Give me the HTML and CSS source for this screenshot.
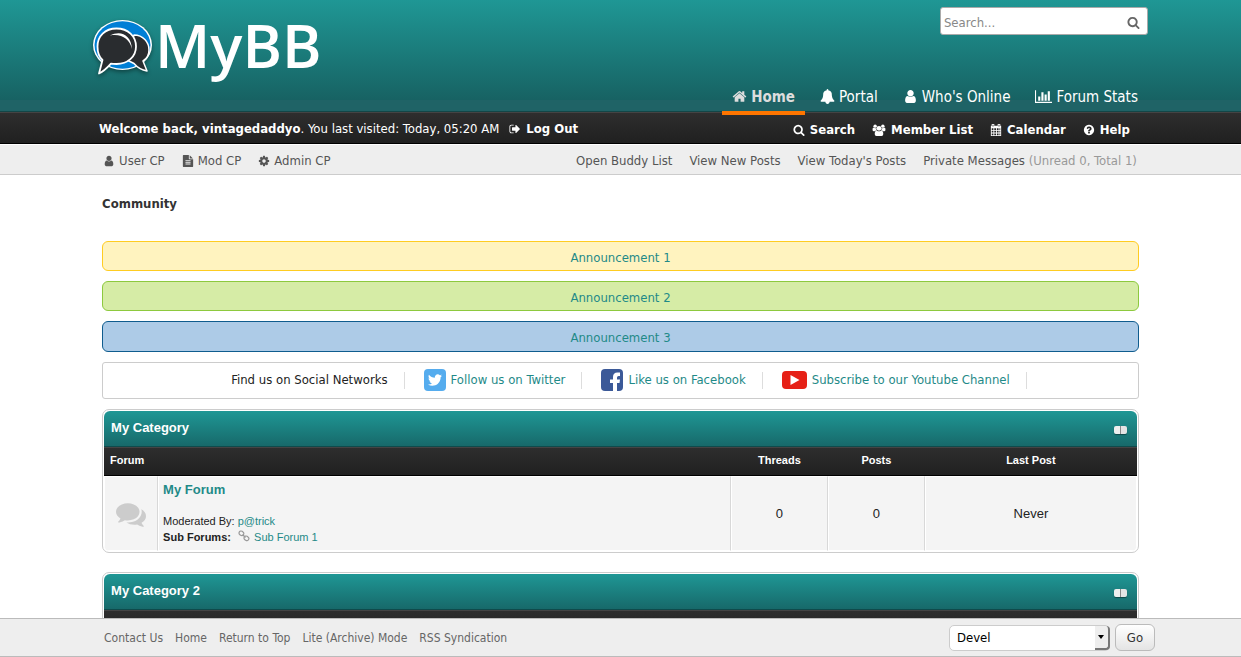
FILE: index.html
```html
<!DOCTYPE html>
<html lang="en">
<head>
<meta charset="utf-8">
<title>Community</title>
<link rel="stylesheet" href="styles.css">
</head>
<body>
<svg class="defs" aria-hidden="true">
  <symbol id="search" viewBox="0 0 1792 1792"><path d="M1216 832q0-185-131.500-316.500t-316.500-131.500-316.500 131.500-131.500 316.500 131.500 316.500 316.500 131.500 316.500-131.500 131.500-316.500zm512 832q0 52-38 90t-90 38q-54 0-90-38l-343-342q-179 124-399 124-143 0-273.500-55.500t-225-150-150-225-55.500-273.500 55.500-273.500 150-225 225-150 273.500-55.500 273.500 55.500 225 150 150 225 55.500 273.500q0 220-124 399l343 343q37 37 37 90z"/></symbol>
  <symbol id="user" viewBox="0 0 1792 1792"><path d="M1536 1399q0 109-62.500 187t-150.500 78h-854q-88 0-150.500-78t-62.500-187q0-85 8.500-160.500t31.500-152 58.500-131 94-89 134.500-34.500q131 128 313 128t313-128q76 0 134.500 34.500t94 89 58.500 131 31.500 152 8.500 160.500zm-256-887q0 159-112.500 271.500t-271.500 112.500-271.500-112.500-112.500-271.500 112.500-271.500 271.500-112.500 271.500 112.500 112.500 271.500z"/></symbol>
</svg>

<header>
  <div class="banner">
    <div class="wrap banner-row">
      <a class="logo" href="#">
        <svg class="logo-mark" viewBox="0 0 60 60" aria-hidden="true">
          <ellipse cx="29.500" cy="26" rx="29.500" ry="25" fill="#fff"/>
          <ellipse cx="29.500" cy="26" rx="28" ry="23.800" fill="#007fd6"/>
          <path d="M41 16C50 16 56 23 56 31c0 5-2 8.500-6 11l4 10c-6-1-10-4-13-7.500l-8-4z" fill="#292c2f" stroke="#fff" stroke-width="1.500" stroke-linejoin="round"/>
          <path d="M23.500 9.500C35 9.500 43 17 43 27.500S34.500 45 23.500 45c-2 0-4 0-5.500-.4-4 4.500-7 7.900-12 9.900l3.500-13.500C5.500 37.500 4.500 33 4.500 27.500 4.500 17 12 9.500 23.500 9.500z" fill="#292c2f" stroke="#fff" stroke-width="1.800" stroke-linejoin="round"/>
          <path d="M17 16.500C27 11 38 15 39 30c-2.500-10-10-15.500-22-13.500z" fill="#fff"/>
        </svg>
        <span>MyBB</span>
      </a>
      <div class="banner-side">
        <form class="search">
          <input type="text" placeholder="Search..." aria-label="Search">
          <button type="button" aria-label="Search"><svg class="icon"><use href="#search"/></svg></button>
        </form>
        <nav class="main-nav">
          <a class="active" href="#"><svg class="icon" viewBox="0 0 1792 1792"><path d="M1472 992v480q0 26-19 45t-45 19h-384v-384h-256v384h-384q-26 0-45-19t-19-45v-480q0-1 .5-3t.5-3l575-474 575 474q1 2 1 6zm223-69l-62 74q-8 9-21 11h-3q-13 0-21-7l-692-577-692 577q-12 8-24 7-13-2-21-11l-62-74q-8-10-7-23.500t11-21.500l719-599q32-26 76-26t76 26l244 204v-195q0-14 9-23t23-9h192q14 0 23 9t9 23v408l219 182q10 8 11 21.500t-7 23.500z"/></svg>Home</a>
          <a href="#"><svg class="icon" viewBox="0 0 1792 1792"><path d="M1728 1408q0 52-38 90t-90 38h-448q0 106-75 181t-181 75-181-75-75-181h-448q-52 0-90-38t-38-90q50-42 91-88t85-119.500 74.500-158.500 50-206 19.500-260q0-152 117-282.500t307-158.500q-8-19-8-39 0-40 28-68t68-28 68 28 28 68q0 20-8 39 190 28 307 158.500t117 282.500q0 139 19.500 260t50 206 74.500 158.500 85 119.500 91 88z"/></svg>Portal</a>
          <a href="#"><svg class="icon"><use href="#user"/></svg>Who's Online</a>
          <a href="#"><svg class="icon wide" viewBox="0 0 2048 1792"><path d="M640 896v512h-256v-512h256zm384-512v1024h-256v-1024h256zm1024 1152v128h-2048v-1536h128v1408h1920zm-640-896v768h-256v-768h256zm384-384v1152h-256v-1152h256z"/></svg>Forum Stats</a>
        </nav>
      </div>
    </div>
  </div>

  <div class="welcome">
    <div class="wrap welcome-row">
      <p class="greeting"><span><b>Welcome back, vintagedaddyo</b>. You last visited: Today, 05:20 AM</span>
        <a href="#"><svg class="icon" viewBox="0 0 1792 1792"><path d="M704 1440q0 4 1 20t.5 26.500-3 23.500-10 19.500-20.500 6.500h-320q-119 0-203.500-84.500t-84.500-203.500v-704q0-119 84.500-203.500t203.500-84.500h320q13 0 22.500 9.500t9.500 22.500q0 4 1 20t.5 26.500-3 23.500-10 19.500-20.500 6.500h-320q-66 0-113 47t-47 113v704q0 66 47 113t113 47h312l11.500 1 11.500 3 8 5.500 7 9 2 13.500zm928-544q0 26-19 45l-544 544q-19 19-45 19t-45-19-19-45v-288h-448q-26 0-45-19t-19-45v-384q0-26 19-45t45-19h448v-288q0-26 19-45t45-19 45 19l544 544q19 19 19 45z"/></svg>Log Out</a>
      </p>
      <nav class="tools">
        <a href="#"><svg class="icon"><use href="#search"/></svg>Search</a>
        <a href="#"><svg class="icon wide" viewBox="0 0 15 14"><circle cx="3" cy="2.500" r="2"/><circle cx="12" cy="2.500" r="2"/><path d="M0 7V6q0-2 1.500-1.500 1.500 1 3 .2Q4 6.500 5 7.500q-2 0-2.500 1H1.500Q0 8.500 0 7zM15 7V6q0-2-1.500-1.500-1.500 1-3 .2.500 1.800-.5 2.800 2 0 2.500 1h1Q15 8.500 15 7z"/><circle cx="7.500" cy="5" r="2.800"/><path d="M5 7.600q2.500 2 5 0 2.500.4 2.500 4 0 2.400-2 2.400h-6q-2 0-2-2.400 0-3.600 2.500-4z"/></svg>Member List</a>
        <a href="#"><svg class="icon" viewBox="0 0 14 14"><path fill-rule="evenodd" d="M1 2h1V0h3v2h4V0h3v2h1v12H1zM2 5v2h2V5zm3 0v2h2V5zm3 0v2h2V5zm3 0v2h1V5zM2 8v2h2V8zm3 0v2h2V8zm3 0v2h2V8zm3 0v2h1V8zM2 11v2h2v-2zm3 0v2h2v-2zm3 0v2h2v-2zm3 0v2h1v-2zM3 1v2h1V1zm7 0v2h1V1z"/></svg>Calendar</a>
        <a href="#"><svg class="icon" viewBox="0 0 1792 1792"><path d="M1024 1376v-192q0-14-9-23t-23-9h-192q-14 0-23 9t-9 23v192q0 14 9 23t23 9h192q14 0 23-9t9-23zm256-672q0-88-55.500-163t-138.500-116-170-41q-243 0-371 213-15 24 8 42l132 100q7 6 19 6 16 0 25-12 53-68 86-92 34-24 86-24 48 0 85.500 26t37.500 59q0 38-20 61t-68 45q-63 28-115.500 86.500t-52.500 125.500v36q0 14 9 23t23 9h192q14 0 23-9t9-23q0-19 21.500-49.500t54.500-49.500q32-18 49-28.500t46-35 44.500-48 28-60.500 12.500-81zm384 192q0 209-103 385.500t-279.500 279.500-385.500 103-385.500-103-279.500-279.500-103-385.500 103-385.500 279.500-279.500 385.500-103 385.500 103 279.500 279.500 103 385.500z"/></svg>Help</a>
      </nav>
    </div>
  </div>

  <div class="panel">
    <div class="wrap panel-row">
      <nav class="panel-links">
        <a href="#"><svg class="icon"><use href="#user"/></svg>User CP</a>
        <a href="#"><svg class="icon" viewBox="0 0 1792 1792"><path d="M1596 476q14 14 28 36h-472v-472q22 14 36 28zm-476 164h544v1056q0 40-28 68t-68 28h-1344q-40 0-68-28t-28-68v-1600q0-40 28-68t68-28h800v544q0 40 28 68t68 28zm160 736v-64q0-14-9-23t-23-9h-704q-14 0-23 9t-9 23v64q0 14 9 23t23 9h704q14 0 23-9t9-23zm0-256v-64q0-14-9-23t-23-9h-704q-14 0-23 9t-9 23v64q0 14 9 23t23 9h704q14 0 23-9t9-23zm0-256v-64q0-14-9-23t-23-9h-704q-14 0-23 9t-9 23v64q0 14 9 23t23 9h704q14 0 23-9t9-23z"/></svg>Mod CP</a>
        <a href="#"><svg class="icon" viewBox="0 0 1792 1792"><path d="M1152 896q0-106-75-181t-181-75-181 75-75 181 75 181 181 75 181-75 75-181zm512-109v222q0 12-8 23t-20 13l-185 28q-19 54-39 91 35 50 107 138 10 12 10 25t-9 23q-27 37-99 108t-94 71q-12 0-26-9l-138-108q-44 23-91 38-16 136-29 186-7 28-36 28h-222q-14 0-24.500-8.500t-11.500-21.500l-28-184q-49-16-90-37l-141 107q-10 9-25 9-14 0-25-11-126-114-165-168-7-10-7-23 0-12 8-23 15-21 51-66.500t54-70.500q-27-50-41-99l-183-27q-13-2-21-12.500t-8-23.500v-222q0-12 8-23t19-13l186-28q14-46 39-92-40-57-107-138-10-12-10-24 0-10 9-23 26-36 98.500-107.500t94.500-71.500q13 0 26 10l138 107q44-23 91-38 16-136 29-186 7-28 36-28h222q14 0 24.500 8.500t11.500 21.500l28 184q49 16 90 37l142-107q9-9 24-9 13 0 25 10 129 119 165 170 7 8 7 22 0 12-8 23-15 21-51 66.500t-54 70.500q26 50 41 98l183 28q13 2 21 12.500t8 23.500z"/></svg>Admin CP</a>
      </nav>
      <nav class="panel-links">
        <a href="#">Open Buddy List</a>
        <a href="#">View New Posts</a>
        <a href="#">View Today's Posts</a>
        <span><a href="#">Private Messages</a> <span class="muted">(Unread 0, Total 1)</span></span>
      </nav>
    </div>
  </div>
</header>

<main>
  <div class="wrap content">
    <h1>Community</h1>
    <a class="notice yellow" href="#">Announcement 1</a>
    <a class="notice green" href="#">Announcement 2</a>
    <a class="notice blue" href="#">Announcement 3</a>

    <ul class="social">
      <li>Find us on Social Networks</li>
      <li><a href="#"><svg class="brand" viewBox="0 0 22 22"><rect width="22" height="22" rx="4" fill="#55acee"/><svg x="3" y="3" width="16" height="16" viewBox="0 0 1792 1792"><path fill="#fff" d="M1684 408q-67 98-162 167 1 14 1 42 0 130-38 259.500t-115.500 248.500-184.500 210.500-258 146-323 54.500q-271 0-496-145 35 4 78 4 225 0 401-138-105-2-188-64.500t-114-159.500q33 5 61 5 43 0 85-11-112-23-185.500-111.500t-73.500-205.500v-4q68 38 146 41-66-44-105-115t-39-154q0-88 44-163 121 149 294.500 238.500t371.500 99.500q-8-38-8-74 0-134 94.500-228.500t228.500-94.500q140 0 236 102 109-21 205-78-37 115-142 178 93-10 186-50z"/></svg></svg>Follow us on Twitter</a></li>
      <li><a href="#"><svg class="brand" viewBox="0 0 22 22"><rect width="22" height="22" rx="4" fill="#3b5998"/><path fill="#fff" d="M12 22v-8H9v-3.500h3V8q0-4.500 4.500-4.500H19V7h-1.500Q16 7 16 8.500v2h3L18.500 14H16v8z"/></svg>Like us on Facebook</a></li>
      <li><a href="#"><svg class="brand youtube" viewBox="0 0 25 18"><rect width="25" height="18" rx="4" fill="#e62117"/><path d="M8.500 4l9 5-9 5z" fill="#fff"/></svg>Subscribe to our Youtube Channel</a></li>
    </ul>

    <section class="board">
      <table>
        <colgroup><col class="c-icon"><col><col class="c-num"><col class="c-num"><col class="c-last"></colgroup>
        <thead>
          <tr class="cat"><th colspan="5"><div class="cat-row"><a href="#">My Category</a><button class="toggle" type="button" aria-label="Collapse My Category"></button></div></th></tr>
          <tr class="heads"><th class="left" colspan="2">Forum</th><th>Threads</th><th>Posts</th><th>Last Post</th></tr>
        </thead>
        <tbody>
          <tr>
            <td><svg class="status" viewBox="0 0 1792 1792"><path d="M1408 768q0 139-94 257t-256.500 186.500-353.500 68.500q-86 0-176-16-124 88-278 128-36 9-86 16h-3q-11 0-20.500-8t-11.500-21q-1-3-1-6.500t.5-6.500 2-6l2.500-5 3.500-5.500 4-5 4.500-5 4-4.500q5-6 23-25t26-29.500 22.500-29 25-38.500 20.500-44q-124-72-195-177t-71-224q0-139 94-257t256.500-186.500 353.500-68.500 353.500 68.500 256.500 186.500 94 257zm384 256q0 120-71 224.500t-195 176.500q10 24 20.500 44t25 38.500 22.500 29 26 29.500 23 25q1 1 4 4.500t4.500 5 4 5 3.500 5.500l2.500 5 2 6 .5 6.500-1 6.500q-3 14-13 22t-22 7q-50-7-86-16-154-40-278-128-90 16-176 16-271 0-472-132 58 4 88 4 161 0 309-45t264-129q125-92 192-212t67-254q0-77-23-152 129 71 204 178t75 230z"/></svg></td>
            <td class="forum">
              <a class="forum-name" href="#">My Forum</a>
              <p>Moderated By: <a href="#">p@trick</a></p>
              <p><b>Sub Forums:</b> <svg class="chain" viewBox="0 0 12 12"><g fill="none" stroke="#999" stroke-width="1.200"><rect x="1" y="1" width="5" height="4" rx="2" transform="rotate(35 3 3)"/><rect x="6" y="6" width="5" height="4" rx="2" transform="rotate(35 8 8)"/><path d="M4.500 4.500l3 3"/></g></svg> <a href="#">Sub Forum 1</a></p>
            </td>
            <td>0</td><td>0</td><td>Never</td>
          </tr>
        </tbody>
      </table>
    </section>

    <section class="board">
      <table>
        <thead>
          <tr class="cat"><th><div class="cat-row"><a href="#">My Category 2</a><button class="toggle" type="button" aria-label="Collapse My Category 2"></button></div></th></tr>
          <tr class="heads"><td></td></tr>
        </thead>
      </table>
    </section>
  </div>
</main>

<footer>
  <div class="wrap footer-row">
    <nav class="footer-links">
      <a href="#">Contact Us</a><a href="#">Home</a><a href="#">Return to Top</a><a href="#">Lite (Archive) Mode</a><a href="#">RSS Syndication</a>
    </nav>
    <form class="theme">
      <div class="picker"><select aria-label="Theme"><option>Devel</option></select><span class="arrow" aria-hidden="true"></span></div>
      <button class="go" type="button">Go</button>
    </form>
  </div>
</footer>
</body>
</html>
```
FILE: styles.css
```css
* { box-sizing: border-box; }
body {
  margin: 0;
  height: 100vh;
  display: grid;
  grid-template-rows: auto minmax(0, 1fr) auto;
  font: 13px/16px "DejaVu Sans Condensed", "Noto Sans", sans-serif;
  color: #222;
  background: #fff;
}
a { color: inherit; text-decoration: none; }
p, h1, ul { margin: 0; padding: 0; }
.defs { position: absolute; width: 0; height: 0; }
.icon { width: 12px; height: 12px; fill: currentColor; flex: none; }
.icon.wide { width: 14px; }
.wrap { width: 85%; margin: 0 auto; }

.banner {
  background: linear-gradient(#1f9795, #176263 100px, #1f6366 100px);
  border-bottom: 1px solid #134647;
}
.banner-row { display: flex; justify-content: space-between; height: 111px; }
.logo { display: flex; align-items: flex-start; gap: 2px; padding-top: 19px; color: #fff; }
.logo-mark { width: 60px; height: 60px; filter: drop-shadow(0 2px 2px #0006); }
.logo span { font: 600 60px/52px "Open Sans", "Noto Sans", sans-serif; }
.banner-side { display: flex; flex-direction: column; align-items: flex-end; justify-content: space-between; padding-top: 7px; }
.search {
  display: flex;
  align-items: center;
  width: 208px;
  height: 28px;
  padding: 3px 7px 0 3px;
  background: #fff;
  border: 1px solid #aaa;
  border-radius: 3px;
}
.search input { flex: 1; min-width: 0; padding: 0; border: 0; outline: 0; background: none; font: inherit; }
.search input::placeholder { color: #888; }
.search button { display: flex; padding: 0; border: 0; background: none; color: #666; }
.search .icon { width: 13px; height: 13px; }
.main-nav { position: relative; display: flex; gap: 5px; margin-bottom: -4px; }
.main-nav a {
  display: flex;
  align-items: center;
  gap: 4px;
  height: 37px;
  padding: 4px 10px 0;
  border-bottom: 4px solid transparent;
  font-size: 15px;
  color: #fff;
}
.main-nav .icon { width: 15px; height: 15px; }
.main-nav .icon.wide { width: 17px; }
.main-nav .active { font-weight: bold; color: #ddd; border-color: #ff7500; }

.welcome {
  background: linear-gradient(#2e2e2e, #202020);
  border-top: 1px solid #444;
  border-bottom: 1px solid #000;
  color: #fff;
}
.welcome-row { display: flex; justify-content: space-between; height: 30px; padding: 0 18px 0 6px; }
.greeting, .tools, .greeting a, .tools a { display: flex; align-items: center; }
.greeting { gap: 10px; padding-top: 1px; }
.tools { gap: 17px; padding-top: 4px; }
.greeting a, .tools a { gap: 5px; font-weight: bold; }

.panel { background: #eee; border-top: 1px solid #fff; border-bottom: 1px solid #ccc; color: #555; }
.panel-row { display: flex; justify-content: space-between; align-items: center; height: 29px; padding: 2px 11px 0 10px; }
.panel-links { display: flex; gap: 17px; }
.panel-links > a { display: flex; align-items: center; gap: 4px; }
.muted { color: #999; }

main { overflow: hidden; }
.content { padding: 21px 9px 0; }
h1 { font-size: 13px; line-height: 16px; margin-bottom: 29px; color: #333; }
.notice {
  display: block;
  margin-bottom: 10px;
  padding: 8px 0 4px;
  border: 1px solid;
  border-radius: 6px;
  text-align: center;
  color: #1f8a88;
}
.yellow { background: #fff3bf; border-color: #ffcc21; }
.green { background: #d6eca6; border-color: #8dc93e; }
.blue { padding-bottom: 5px; background: #adcbe7; border-color: #0f5c8e; }

.social {
  display: flex;
  justify-content: center;
  margin-bottom: 10px;
  padding: 5px 0 6px 36px;
  border: 1px solid #ccc;
  border-radius: 3px;
  list-style: none;
}
.social li { display: flex; align-items: center; height: 24px; margin-right: 19px; }
.social li::after { content: ""; width: 1px; height: 17px; margin-left: 16px; background: #ddd; }
.social a { display: flex; align-items: center; gap: 5px; color: #1f8a88; }
.brand { width: 22px; height: 22px; }
.brand.youtube { width: 25px; height: 18px; }

.board { margin-bottom: 19px; padding: 1px; border: 1px solid #ccc; border-radius: 7px; font-family: "Liberation Sans", sans-serif; }
table { width: 100%; border-collapse: separate; border-spacing: 0; table-layout: fixed; border-radius: 6px; overflow: hidden; }
.c-icon { width: 54px; }
.c-num { width: 97px; }
.c-last { width: 212px; }
th, td { padding: 0; }
.cat th { height: 36px; padding: 0 10px 2px 7px; background: linear-gradient(#1f9795, #17696a); border-bottom: 1px solid #0f4a4b; color: #fff; }
.cat-row { display: flex; justify-content: space-between; align-items: center; font-size: 13px; }
.toggle {
  width: 13px;
  height: 8px;
  margin-top: 4px;
  padding: 0;
  border: 0;
  border-radius: 2px;
  background: linear-gradient(90deg, #eee 6px, #888 6px, #888 7px, #e4e4e4 7px);
  box-shadow: 0 1px 1px #0006;
}
.heads th, .heads td { height: 29px; padding-bottom: 3px; background: linear-gradient(#2e2e2e, #202020); border-top: 1px solid #444; border-bottom: 1px solid #000; color: #fff; font-size: 11px; }
.heads .left { padding-left: 6px; text-align: left; }
tbody td { height: 75px; background: #f4f4f4; border: 1px solid #fff; border-right-color: #d8d8d8; text-align: center; }
tbody td:last-child { border-right-color: #fff; }
.status { width: 30px; height: 30px; fill: #ccc; vertical-align: middle; }
tbody .forum { padding-left: 4px; text-align: left; font-size: 11px; }
.forum a { color: #1f8a88; }
.forum-name { display: block; margin-bottom: 15px; font-size: 13px; font-weight: bold; }
.chain { width: 12px; height: 12px; margin: 0 1px 0 4px; vertical-align: -1px; }

footer { background: #eee; border-top: 1px solid #bbb; border-bottom: 1px solid #bbb; }
.footer-row { display: flex; justify-content: space-between; align-items: center; height: 37px; padding: 0 0 0 11px; }
.footer-links { display: flex; gap: 12px; font-size: 12px; color: #666; }
.theme { display: flex; align-items: center; gap: 5px; margin-right: -7px; }
.picker { position: relative; display: flex; }
select {
  appearance: none;
  width: 161px;
  height: 26px;
  padding: 1px 7px 0;
  border: 1px solid #ccc;
  border-radius: 5px;
  background: #fff;
  font: inherit;
  color: #000;
}
.arrow {
  position: absolute;
  right: 0;
  top: 1px;
  display: grid;
  place-items: center;
  width: 15px;
  height: 24px;
  background: #eee;
  border-right: 2px solid #777;
  border-bottom: 2px solid #777;
  border-radius: 0 4px 4px 0;
  pointer-events: none;
}
.arrow::after { content: ""; border: 3px solid transparent; border-top: 4px solid #000; border-bottom: 0; }
.go {
  width: 40px;
  height: 27px;
  padding: 1px 0 0;
  border: 1px solid #bbb;
  border-radius: 6px;
  background: linear-gradient(#fff, #e4e4e4);
  font: inherit;
  color: #333;
}
```
